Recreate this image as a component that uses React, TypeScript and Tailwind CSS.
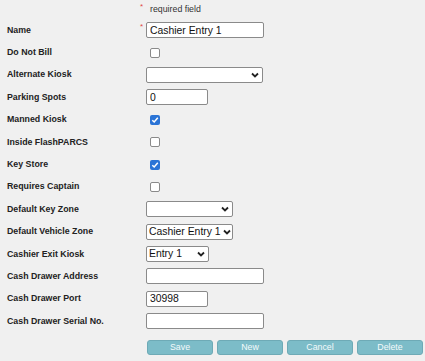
import React from "react";

type Ctl =
  | { kind: "text"; value: string; w: number }
  | { kind: "check"; checked: boolean }
  | { kind: "select"; value: string; w: number };

const rows: { label: string; req?: boolean; ctl: Ctl }[] = [
  { label: "Name", req: true, ctl: { kind: "text", value: "Cashier Entry 1", w: 118 } },
  { label: "Do Not Bill", ctl: { kind: "check", checked: false } },
  { label: "Alternate Kiosk", ctl: { kind: "select", value: "", w: 117 } },
  { label: "Parking Spots", ctl: { kind: "text", value: "0", w: 62 } },
  { label: "Manned Kiosk", ctl: { kind: "check", checked: true } },
  { label: "Inside FlashPARCS", ctl: { kind: "check", checked: false } },
  { label: "Key Store", ctl: { kind: "check", checked: true } },
  { label: "Requires Captain", ctl: { kind: "check", checked: false } },
  { label: "Default Key Zone", ctl: { kind: "select", value: "", w: 87 } },
  { label: "Default Vehicle Zone", ctl: { kind: "select", value: "Cashier Entry 1", w: 87 } },
  { label: "Cashier Exit Kiosk", ctl: { kind: "select", value: "Entry 1", w: 63 } },
  { label: "Cash Drawer Address", ctl: { kind: "text", value: "", w: 118 } },
  { label: "Cash Drawer Port", ctl: { kind: "text", value: "30998", w: 62 } },
  { label: "Cash Drawer Serial No.", ctl: { kind: "text", value: "", w: 118 } },
];

function Chevron() {
  return (
    <svg width="8" height="6" viewBox="0 0 8 6" className="shrink-0">
      <polyline points="1,1.5 4,4.5 7,1.5" fill="none" stroke="#222" strokeWidth="1.8" />
    </svg>
  );
}

function Control({ ctl }: { ctl: Ctl }) {
  if (ctl.kind === "check") {
    return ctl.checked ? (
      <div className="ml-[4px] flex h-[10px] w-[10px] items-center justify-center rounded-[2px] bg-[#2b74d6]">
        <svg width="8" height="8" viewBox="0 0 8 8">
          <polyline points="1.3,4.2 3.2,6 6.8,1.8" fill="none" stroke="#fff" strokeWidth="1.5" />
        </svg>
      </div>
    ) : (
      <div className="ml-[4px] h-[10px] w-[10px] rounded-[2px] border border-[#8a8a8a] bg-white" />
    );
  }
  if (ctl.kind === "select") {
    return (
      <div
        className="flex h-[16px] items-center justify-between gap-[2px] rounded-[2px] border border-[#8a8a8a] bg-white pl-[2px] pr-[3px] text-[10.4px] text-[#111]"
        style={{ width: ctl.w }}
      >
        <span className="whitespace-nowrap leading-none">{ctl.value}</span>
        <Chevron />
      </div>
    );
  }
  return (
    <input
      readOnly
      value={ctl.value}
      className="h-[16px] rounded-[2px] border border-[#8a8a8a] bg-white px-[3px] text-[10.4px] text-[#111] outline-none"
      style={{ width: ctl.w }}
    />
  );
}

export default function App() {
  return (
    <div
      className="h-[361px] w-[425px] overflow-hidden bg-[#f0f0f0] pl-[7px] text-[#222]"
      style={{ fontFamily: '"Liberation Sans", Arial, sans-serif' }}
    >
      {/* required field hint */}
      <div className="flex h-[19px] items-center">
        <div className="flex w-[139px] justify-end pr-[3px]">
          <span className="relative top-[-3px] text-[8px] text-[#e04848]">*</span>
        </div>
        <span className="pl-[4px] text-[8.8px] text-[#333]">required field</span>
      </div>

      {rows.map((r) => (
        <div key={r.label} className="flex h-[22.4px] items-center">
          <div className="flex w-[139px] items-center justify-between pr-[3px]">
            <span className="text-[8.8px] font-bold text-[#222]">{r.label}</span>
            {r.req && <span className="relative top-[-3px] text-[8px] text-[#e04848]">*</span>}
          </div>
          <Control ctl={r.ctl} />
        </div>
      ))}

      <div className="mt-[7.5px] flex gap-[4px] pl-[140px]">
        {["Save", "New", "Cancel", "Delete"].map((b) => (
          <button
            key={b}
            className="flex h-[15px] w-[66px] items-center justify-center rounded-[3px] border border-[#6eaab6] bg-[#7cbcc8] text-[8.8px] text-[#f4fafb]"
          >
            {b}
          </button>
        ))}
      </div>
    </div>
  );
}
